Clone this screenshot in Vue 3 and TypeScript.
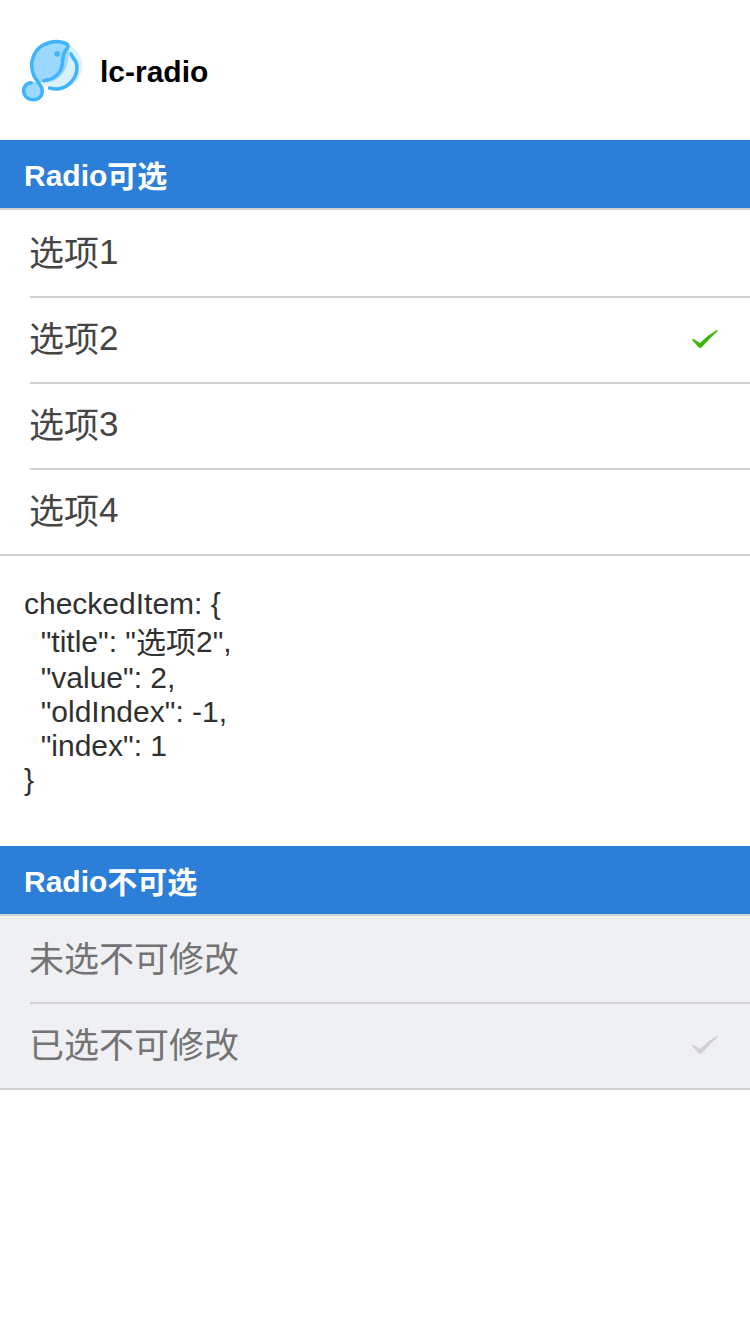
<script setup lang="ts">
import { computed, ref } from 'vue'

interface RadioItem {
  title: string
  value: number
}

const items: RadioItem[] = [
  { title: '选项1', value: 1 },
  { title: '选项2', value: 2 },
  { title: '选项3', value: 3 },
  { title: '选项4', value: 4 },
]
const disabledItems = [
  { title: '未选不可修改', checked: false },
  { title: '已选不可修改', checked: true },
]

const index = ref(1)
const oldIndex = ref(-1)

function select(i: number) {
  if (i === index.value) return
  oldIndex.value = index.value
  index.value = i
}

// Splits a text into Han and Latin runs, so that each can sit on its own baseline.
function runs(text: string) {
  return (text.match(/[\u4e00-\u9fff]+|[^\u4e00-\u9fff]+/g) ?? []).map((part) => ({
    part,
    han: /[\u4e00-\u9fff]/.test(part),
  }))
}

const lines = computed(() => {
  const checked = { ...items[index.value], oldIndex: oldIndex.value, index: index.value }
  return `checkedItem: ${JSON.stringify(checked, null, 2)}`.split('\n')
})
</script>

<template>
  <div class="page">
    <header class="header">
      <svg class="logo" viewBox="30 24 192 192" width="64" height="64">
        <circle cx="146" cy="108" r="70" fill="#d9f0ff" />
        <path d="M78 154C60 128 58 96 74 70C92 40 130 28 168 38Q182 46 176 72C174 108 160 158 101 156L92 158Z" fill="#9ad8ff" />
        <circle cx="72" cy="184" r="29" fill="#9ad8ff" />
        <path
          d="M64 158C48 158 37 174 42 190C47 207 68 214 84 206C97 199 100 181 93 169C86 157 78 150 72 138C57 105 67 65 98 46C120 34 146 32 168 40Q180 46 169 58C157 72 159 84 157 102C153 130 133 149 101 152M183 71C184 82 200 87 201 110C202 151 163 187 119 174"
          fill="none" stroke="#40b3ff" stroke-width="10.500" stroke-linecap="round" stroke-linejoin="round"
        />
        <circle cx="141.500" cy="71.500" r="8.500" fill="#40b3ff" />
      </svg>
      <h1 class="name">lc-radio</h1>
    </header>

    <h2 class="title">Radio<span class="han">可选</span></h2>
    <div class="list">
      <div v-for="(item, i) in items" :key="item.value" class="cell" @click="select(i)">
        <span class="label"><span v-for="run in runs(item.title)" :key="run.part" :class="{ han: run.han }">{{ run.part }}</span></span>
        <svg v-if="i === index" class="check" viewBox="33 27 84 60" width="28" height="20">
          <path d="M36 59Q37 56 42 58L60 69Q84 45 109 31Q113 29 113 33Q92 52 67 80Q60 87 54 80Z" fill="currentColor" />
        </svg>
      </div>
    </div>
    <div class="result">
      <div v-for="(line, i) in lines" :key="i" class="line" :class="{ tall: line.includes('title') }"><span v-for="run in runs(line)" :key="run.part" :class="{ han: run.han }">{{ run.part }}</span></div>
    </div>

    <h2 class="title">Radio<span class="han">不可选</span></h2>
    <div class="list disabled">
      <div v-for="item in disabledItems" :key="item.title" class="cell">
        <span class="label"><span class="han">{{ item.title }}</span></span>
        <svg v-if="item.checked" class="check" viewBox="33 27 84 60" width="28" height="20">
          <path d="M36 59Q37 56 42 58L60 69Q84 45 109 31Q113 29 113 33Q92 52 67 80Q60 87 54 80Z" fill="currentColor" />
        </svg>
      </div>
    </div>
  </div>
</template>

<style>
body {
  background: #fff;
}
</style>

<style scoped>
.page {
  min-height: 1334px;
  font-family: "Liberation Sans", "Noto Sans CJK SC", sans-serif;
  font-size: 30px;
}
.header {
  box-sizing: border-box;
  display: flex;
  align-items: center;
  height: 140px;
  padding: 0 20px;
  gap: 16px;
}
.name {
  margin: 4px 0 0;
  font-size: 30px;
  line-height: 34px;
}
.title {
  margin: 0;
  height: 68px;
  padding-left: 24px;
  background: #2b7fd8;
  color: #fff;
  font-size: 30px;
  line-height: 72px;
}
.han {
  line-height: 1;
  vertical-align: -1px;
}
.list {
  border-top: 2px solid #d1d1d1;
  border-bottom: 2px solid #d1d1d1;
  color: #454545;
}
.cell {
  position: relative;
  display: flex;
  align-items: center;
  justify-content: space-between;
  height: 86px;
  padding: 0 31px 0 29px;
}
.cell + .cell::before {
  content: "";
  position: absolute;
  top: 0;
  left: 30px;
  right: 0;
  height: 2px;
  background: #d1d1d1;
}
.label {
  height: 86px;
  font-size: 35px;
  line-height: 84px;
}
.label .han {
  vertical-align: -2px;
}
.check {
  color: #3db510;
}
.disabled {
  background: #eff0f3;
  color: #737373;
}
.disabled .check {
  color: #d1d1d1;
}
.result {
  box-sizing: border-box;
  height: 290px;
  padding: 31px 24px 0;
  color: #303030;
}
.line {
  height: 34px;
  line-height: 34px;
  white-space: pre;
}
.tall {
  padding: 4px 0 2px;
}
</style>
